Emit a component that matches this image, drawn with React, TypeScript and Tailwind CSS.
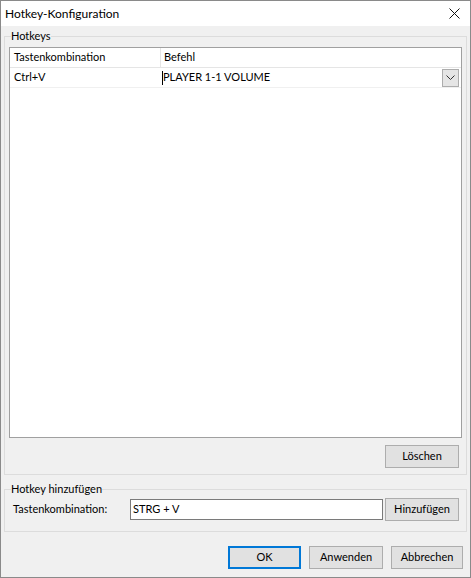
import React from 'react';

const font = { fontFamily: '"Segoe UI", Lato, "Noto Sans", sans-serif' };

const WinButton: React.FC<{ label: string; className?: string; primary?: boolean }> = ({ label, className = '', primary }) => (
  <button
    className={
      'h-[23px] bg-[#e1e1e1] text-[11px] text-black flex items-center justify-center ' +
      (primary ? 'border-2 border-[#0078d7] ' : 'border border-[#adadad] ') +
      className
    }
  >
    {label}
  </button>
);

export default function App() {
  return (
    <div
      className="w-[471px] h-[578px] border border-[#8a8a8a] flex flex-col text-[11px] text-black overflow-hidden"
      style={font}
    >
      {/* title bar */}
      <div className="h-[25px] bg-white flex items-center justify-between pl-[4px] pr-[10px]">
        <span className="leading-[16px] text-[12px]">Hotkey-Konfiguration</span>
        <svg width="11" height="11" viewBox="0 0 11 11">
          <path d="M0.5 0.5 L10.5 10.5 M10.5 0.5 L0.5 10.5" stroke="#111" strokeWidth="1" />
        </svg>
      </div>

      <div className="flex-1 bg-[#f0f0f0] px-[3px] pt-[2px] flex flex-col">
        {/* Hotkeys group */}
        <fieldset className="border border-[#dcdcdc] pl-[4px] pr-[4px] pb-[6px] flex flex-col">
          <legend className="ml-[2px] px-0 leading-[16px]">Hotkeys</legend>
          <div className="mt-[3px] h-[391px] bg-white border border-[#a0a0a0] flex flex-col">
            <div className="h-[20px] flex border-b border-[#e5e5e5]">
              <div className="w-[151px] pl-[4px] flex items-center border-r border-[#e5e5e5]">Tastenkombination</div>
              <div className="flex-1 pl-[3px] flex items-center">Befehl</div>
            </div>
            <div className="h-[20px] flex border-b border-[#f0f0f0]">
              <div className="w-[151px] pl-[4px] flex items-center">Ctrl+V</div>
              <div className="flex-1 flex items-center pr-[2px]">
                <span className="w-[1px] h-[14px] bg-black ml-[1px]" />
                <span className="flex-1">PLAYER 1-1 VOLUME</span>
                <div className="w-[17px] h-[18px] bg-[#e5e5e5] border border-[#adadad] flex items-center justify-center">
                  <svg width="9" height="5" viewBox="0 0 9 5">
                    <path d="M0.5 0.5 L4.5 4.5 L8.5 0.5" stroke="#333" fill="none" strokeWidth="1" />
                  </svg>
                </div>
              </div>
            </div>
          </div>
          <WinButton label="Löschen" className="mt-[7px] self-end w-[74px] mr-[3px]" />
        </fieldset>

        {/* add group */}
        <fieldset className="mt-[6px] border border-[#dcdcdc] pl-[8px] pr-[7px] pb-[10px] pt-[1px] flex items-center">
          <legend className="ml-[-2px] px-0 leading-[16px]">Hotkey hinzufügen</legend>
          <span className="w-[117px]">Tastenkombination:</span>
          <div className="w-[253px] h-[21px] bg-white border border-[#7a7a7a] pl-[2px] flex items-center">STRG + V</div>
          <WinButton label="Hinzufügen" className="ml-[2px] w-[74px]" />
        </fieldset>

        {/* dialog buttons */}
        <div className="mt-[14px] flex justify-end pr-[4px] gap-[8px]">
          <WinButton label="OK" primary className="w-[73px]" />
          <WinButton label="Anwenden" className="w-[74px]" />
          <WinButton label="Abbrechen" className="w-[72px]" />
        </div>
      </div>
    </div>
  );
}
